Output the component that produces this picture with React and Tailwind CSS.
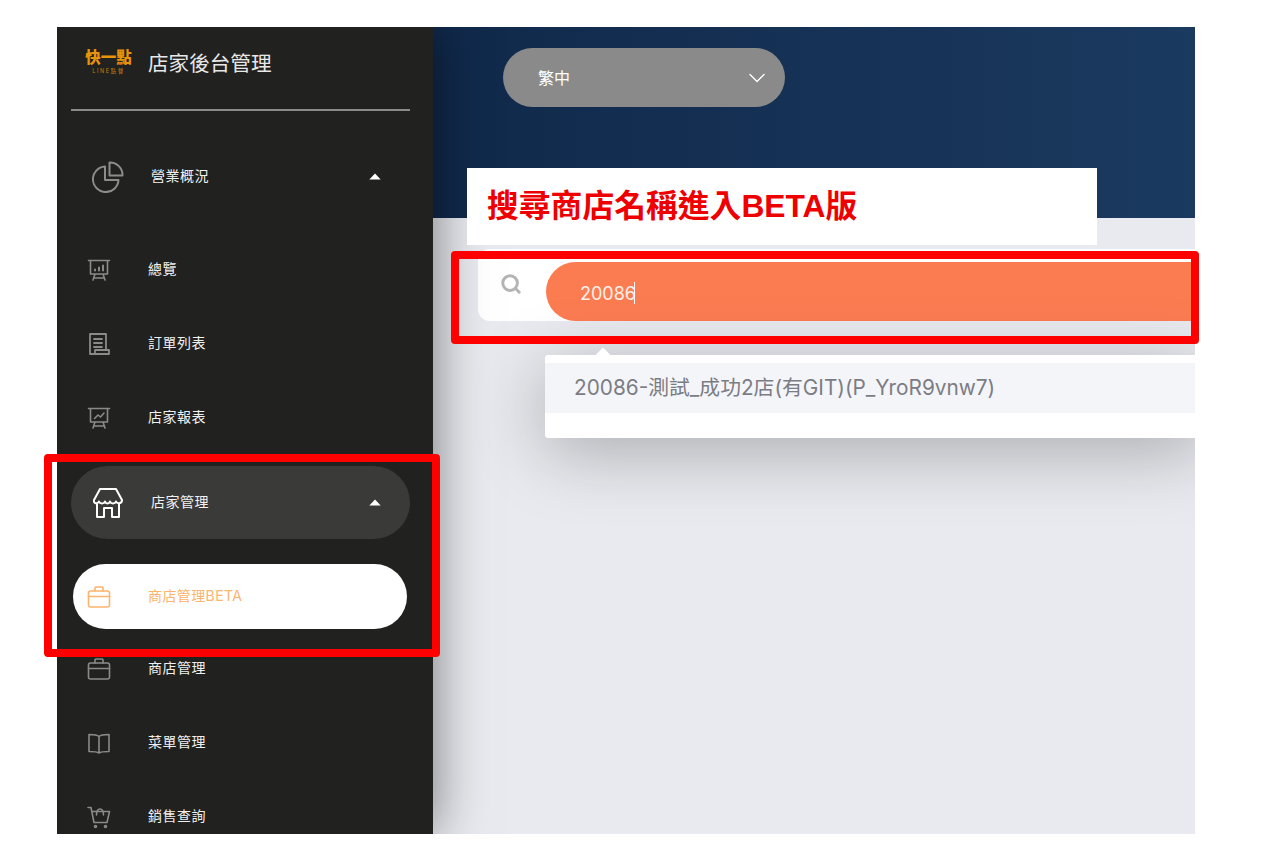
import React from "react";
import { Search, ChevronDown } from "lucide-react";

const Svg = ({ children, className = "w-[24px] h-[24px]", sw = 1.6 }) => (
  <svg viewBox="0 0 24 24" fill="none" stroke="currentColor" strokeWidth={sw} strokeLinecap="round" strokeLinejoin="round" className={className}>
    {children}
  </svg>
);

const Pie = () => (
  <svg viewBox="0 0 32 32" fill="none" stroke="currentColor" strokeWidth="2" strokeLinejoin="round" className="w-[32px] h-[32px] text-[#8c8c8c]">
    <path d="M13 5.500a12.800 12.800 0 1 0 13.500 13.500H13Z" />
    <path d="M17.500 1.500a12.500 12.500 0 0 1 13 13h-13Z" />
  </svg>
);
const BoardBars = () => (
  <Svg>
    <path d="M1.500 2.500h21M3.500 2.500v13.500h17V2.500M8 16l-2 6M16 16l2 6M7 20h10" />
    <path d="M8 12.500v-1M12 12.500v-3M16 12.500v-5" strokeWidth="2" />
  </Svg>
);
const BoardLine = () => (
  <Svg>
    <path d="M1.500 2.500h21M3.500 2.500v13.500h17V2.500M8 16l-2 6M16 16l2 6M7 20h10" />
    <path d="M7.500 12.500l3.500-3.500 2.500 2 3.500-4" />
  </Svg>
);
const Receipt = () => (
  <Svg sw={1.8}>
    <path d="M19 18V2H3v20h19v-4H8v4M7 7h8M7 11h8M7 15h8" />
  </Svg>
);
const Case = () => (
  <Svg>
    <rect x="1.500" y="6" width="21" height="16" rx="2" />
    <path d="M8 6V3a1 1 0 0 1 1-1h6a1 1 0 0 1 1 1v3M1.500 11.500h21" />
  </Svg>
);
const Book = () => (
  <Svg>
    <path d="M12 5.500C10 3.500 5 3.500 2 3.500v17c3 0 8 0 10 1.500 2-1.500 7-1.500 10-1.500v-17c-3 0-8 0-10 2ZM12 5.500V22" />
  </Svg>
);
const Cart = () => (
  <Svg>
    <path d="M1 2.500h3l3 15h13l2.500-11H5M9.500 10c0-3 1-6 3.500-6s3.500 3 3.500 6" />
    <circle cx="8.500" cy="21.500" r="1" />
    <circle cx="18.500" cy="21.500" r="1" />
  </Svg>
);
const StoreIcon = () => (
  <svg viewBox="0 0 30 32" fill="none" stroke="currentColor" strokeWidth="2" strokeLinejoin="round" strokeLinecap="round" className="w-[30px] h-[32px] text-white">
    <path d="M7 2h16l6 11c0 4-5 4-6 1.500-1 2.500-5 2.500-6 0-.8 2.500-4.200 2.500-5 0-1 2.500-5 2.500-6 0-1 2.500-6 2.500-5-1.500Z" />
    <path d="M4 17v13h7v-9h8v9h7V17" />
  </svg>
);
const Caret = () => (
  <svg viewBox="0 0 12 7" className="w-[12px] h-[7px] ml-auto fill-white">
    <path d="M6 .5 11.700 6.500H.3Z" />
  </svg>
);

const Group = ({ icon, label, active }) => (
  <div className={`flex items-center h-[73px] w-[339px] ml-[14px] pl-[21px] pr-[29px] rounded-full ${active ? "bg-[#3a3a38]" : ""}`}>
    <div className="w-[32px] flex justify-center shrink-0">{icon}</div>
    <span className="ml-[27px] -mt-[3px] text-[14px] tracking-[0.5px] text-[#f2f2f2]">{label}</span>
    <Caret />
  </div>
);

const Item = ({ icon, label }) => (
  <div className="flex items-center h-[74px] pl-[30px] shrink-0">
    <div className="w-[24px] flex justify-center shrink-0 text-[#8a8a8a]">{icon}</div>
    <span className="ml-[37px] -mt-[3px] text-[14px] tracking-[0.5px] text-[#f0f0f0]">{label}</span>
  </div>
);

export default function App() {
  return (
    <div className="relative h-[864px] w-[1266px] overflow-hidden bg-white pt-[27px] pl-[57px] font-['Inter','Noto_Sans_CJK_TC',sans-serif]">
      <div className="flex h-[807px] w-[1138px] overflow-hidden bg-[#e9eaef]">
        <aside className="relative z-10 flex w-[376px] shrink-0 flex-col overflow-hidden bg-[#21211f] shadow-[0_0_50px_rgba(0,0,0,0.5)]">
          <div className="mr-[23px] ml-[14px] flex h-[84px] shrink-0 items-start border-b-2 border-[#8a8a8a] pt-[22px] pl-[14px]">
            <div className="flex w-[47px] flex-col items-center">
              <span className="text-[15.5px] leading-[18px] font-black whitespace-nowrap text-[#e8930c]">快一點</span>
              <span className="text-[5.5px] leading-[8px] tracking-[1.6px] whitespace-nowrap text-[#c97f10]">LINE點餐</span>
            </div>
            <span className="ml-[16px] text-[20.6px] leading-[30px] text-[#e8e8e8]">店家後台管理</span>
          </div>

          <div className="mt-[29px]">
            <Group icon={<Pie />} label="營業概況" />
          </div>
          <div className="mt-[20px]">
            <Item icon={<BoardBars />} label="總覽" />
            <Item icon={<Receipt />} label="訂單列表" />
            <Item icon={<BoardLine />} label="店家報表" />
          </div>
          <div className="mt-[11px]">
            <Group icon={<StoreIcon />} label="店家管理" active />
          </div>
          <div className="mt-[25px] ml-[16px] flex h-[65px] w-[334px] shrink-0 items-center rounded-full bg-white pl-[14px]">
            <div className="w-[24px] text-[#fdb46c]"><Case /></div>
            <span className="ml-[37px] -mt-[3px] text-[14px] tracking-[0.4px] text-[#fdb46c]">商店管理BETA</span>
          </div>
          <div className="mt-[3px]">
            <Item icon={<Case />} label="商店管理" />
            <Item icon={<Book />} label="菜單管理" />
            <Item icon={<Cart />} label="銷售查詢" />
          </div>
        </aside>

        <main className="relative min-w-0 flex-1 overflow-hidden">
          <div className="h-[191px] bg-gradient-to-r from-[#10294b] to-[#1b3a5f] pt-[21px] pl-[70px]">
            <div className="flex h-[59px] w-[282px] items-center rounded-full bg-[#8a8a8a] pr-[14px] pl-[35px] text-[16px] text-white">
              <span>繁中</span>
              <ChevronDown className="ml-auto h-[28px] w-[28px]" strokeWidth={1.2} />
            </div>
          </div>

          <div className="relative mt-[31px] ml-[45px] h-[72px] rounded-l-xl bg-white pt-[13px] pl-[68px]">
            <Search className="absolute top-[24px] left-[22px] h-[22px] w-[22px] text-[#b4b4b4]" strokeWidth={3.2} />
            <div className="flex h-[59px] items-center rounded-l-full bg-[#fc7c52] pt-[3px] pl-[34px] text-[18px] text-[#fff1ea]">
              <span>20086</span>
              <span className="ml-[-2px] h-[22px] w-px bg-white" />
            </div>
          </div>

          <div className="absolute top-[328px] left-[112px] w-[660px] rounded-[3px] bg-white pt-[8px] pb-[25px] shadow-[0_14px_70px_rgba(0,0,0,0.27)]">
            <div className="absolute -top-[5px] left-[52px] h-[12px] w-[12px] rotate-45 bg-white" />
            <div className="relative flex h-[50px] items-center bg-[#f4f5f9] pl-[29px] text-[20.8px] whitespace-nowrap text-[#7c7c84]">
              20086-測試_成功2店(有GIT)(P_YroR9vnw7)
            </div>
          </div>
        </main>
      </div>

      <div className="absolute top-[168px] left-[467px] z-20 flex h-[77px] w-[630px] items-center bg-white pl-[20px] font-['Liberation_Sans','Noto_Sans_CJK_TC',sans-serif] text-[31.8px] font-bold text-[#ee0000]">
        搜尋商店名稱進入BETA版
      </div>
      <div className="absolute top-[251px] left-[451px] z-30 h-[93px] w-[748px] rounded-[4px] border-[8px] border-[#ff0000]" />
      <div className="absolute top-[454px] left-[44px] z-30 h-[203px] w-[396px] rounded-[4px] border-[8px] border-[#ff0000]" />
    </div>
  );
}
